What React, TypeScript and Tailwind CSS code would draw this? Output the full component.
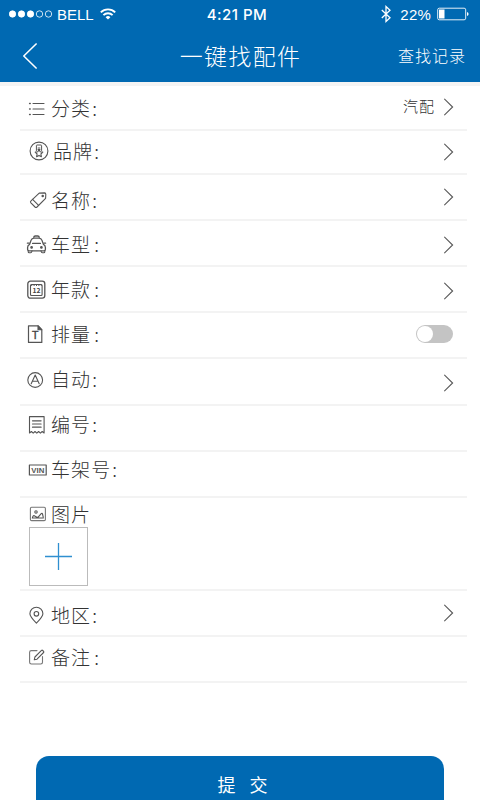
import { useState, type ReactNode } from "react";
import { clsx } from "clsx";

interface FieldRowProps {
  icon: ReactNode;
  label: string;
  height: string;
  iconTop: string;
  labelTop: string;
  labelLeft?: string;
  wideColon?: boolean;
  arrowTop?: string;
  value?: string;
  control?: ReactNode;
  children?: ReactNode;
}

function Glyph({ children }: { children: ReactNode }) {
  return (
    <svg
      viewBox="0 0 20 20"
      className="size-5 overflow-visible"
      fill="none"
      stroke="#555"
      strokeWidth="1.1"
      strokeLinecap="round"
      strokeLinejoin="round"
    >
      {children}
    </svg>
  );
}

function Chevron() {
  return (
    <svg viewBox="0 0 10 18" className="h-[18px] w-2.5" fill="none" stroke="#555" strokeWidth="1.1">
      <path d="M0.3 0.8 8.6 9 0.3 17.2" />
    </svg>
  );
}

const ListIcon = () => (
  <Glyph>
    <path d="M6 4.5h11M6 10h11M6 15.5h11" />
    <path d="M2.6 4.5h.6M2.6 10h.6M2.6 15.5h.6" strokeWidth="1.5" />
  </Glyph>
);

const MedalIcon = () => (
  <Glyph>
    <circle cx="12" cy="10" r="8.9" />
    <path d="M9.4 9.5V4.6q0-.6.6-.6h4q.6 0 .6.6v4.9M11.1 7h1.8M11 8.5h2" strokeWidth="1" />
    <path d="m12 8.4 1.2 2.3 2.6.4-1.9 1.9.5 2.7-2.4-1.3-2.4 1.3.5-2.7-1.9-1.9 2.6-.4z" />
  </Glyph>
);

const TagIcon = () => (
  <Glyph>
    <path d="M12.2 3.1 17.6 2.9Q18.7 3 18.8 4.2L18.6 8.3 10 17Q9 17.9 8 17L3.9 12.8Q3 11.8 4 10.9Z" />
    <path d="m5.6 9.3 6 6" />
    <circle cx="15.7" cy="6" r=".7" fill="#555" />
  </Glyph>
);

const CarIcon = () => (
  <Glyph>
    <path d="M6.8 2.2Q7 1 8.2 1h2.6Q12 1 12.2 2.2" strokeWidth="1.4" />
    <path
      d="M2.6 9.4 4 5.4Q4.8 3.2 7 3.2h5q2.2 0 3 2.2l1.4 4q2 .9 2 3v1.8q0 1.6-1.6 1.6H2.2Q.6 15.8.6 14.2v-1.8q0-2.1 2-3Z"
      strokeWidth="1.3"
    />
    <path d="M.4 8.2h1.8M18.6 8.2h-1.8M5.6 8.4h7.8" strokeWidth="1.3" />
    <path d="M1.2 15.8v1q0 1 1 1h1.4q1 0 1.4-2M17.8 15.8v1q0 1-1 1h-1.4q-1 0-1.4-2" />
    <circle cx="4.6" cy="12.4" r=".8" fill="#555" />
    <circle cx="14.4" cy="12.4" r=".8" fill="#555" />
  </Glyph>
);

const CalendarIcon = () => (
  <Glyph>
    <rect x=".8" y="1.2" width="17" height="17" rx="2.6" strokeWidth="1.3" />
    <rect x="3.5" y="4.5" width="11.6" height="11" rx="1" />
    <path d="M4.2 5.4h10.5" strokeDasharray="1 1.4" strokeWidth="1.4" strokeLinecap="butt" />
    <text x="9.4" y="13.2" fontSize="6.8" fontWeight="700" textAnchor="middle" fill="#444" stroke="none">
      12
    </text>
  </Glyph>
);

const DocIcon = () => (
  <Glyph>
    <path d="M1.5 1.8h9.7l3.6 3.8v12.8H1.5Z" strokeWidth="1.2" />
    <path d="M11 1.8v4h3.8Z" fill="#555" />
    <text
      x="8.2"
      y="15.2"
      fontSize="10.5"
      textAnchor="middle"
      className="font-['Liberation_Sans',sans-serif]"
      fill="#444"
      stroke="#444"
      strokeWidth=".4"
    >
      T
    </text>
  </Glyph>
);

const AutoIcon = () => (
  <Glyph>
    <circle cx="8.2" cy="10" r="7.4" />
    <path d="M4.2 13.8 8.2 5 12.2 13.8M5.4 11.3h5.6" />
  </Glyph>
);

const ReceiptIcon = () => (
  <Glyph>
    <path d="M2.5 18V1.6h14.6V18l-1.9-1.5-1.8 1.6-1.8-1.6-1.8 1.6L8 16.5l-1.8 1.6-1.8-1.6Z" />
    <path d="M5.5 5.8h8.6M5.5 9h8.6M5.5 12.2h8.6" strokeWidth="1.2" />
  </Glyph>
);

const VinIcon = () => (
  <Glyph>
    <rect x="2.4" y="5" width="16.8" height="10" strokeWidth="1.2" />
    <text
      x="10.8"
      y="12.8"
      fontSize="7.8"
      textAnchor="middle"
      className="font-['Liberation_Sans',sans-serif] font-bold"
      fill="#555"
      stroke="none"
    >
      VIN
    </text>
  </Glyph>
);

const PhotoIcon = () => (
  <Glyph>
    <rect x="3.4" y="3.2" width="15" height="13.4" rx="1.2" stroke="#777" />
    <circle cx="9" cy="8" r="1.2" />
    <path d="M5.5 13.4q.8-2.6 2.3-1.4l2 1.2q1 .5 1.8-.5l2.6-3q.8-.8 1.3.3l.8 3.4M5.3 14h11" />
  </Glyph>
);

const PinIcon = () => (
  <Glyph>
    <path d="M9.4 18.2C5 13.6 2.9 11.3 2.9 8.7a6.5 6.5 0 0 1 13 0c0 2.6-2.1 4.9-6.5 9.5Z" />
    <circle cx="9.4" cy="8.8" r="2.3" />
  </Glyph>
);

const NoteIcon = () => (
  <Glyph>
    <path d="M10 3.6H4.4Q2.6 3.6 2.6 5.3v10Q2.6 17 4.4 17h9.4q1.7 0 1.7-1.7V9.6" stroke="#777" />
    <path d="m7.3 12.8.6-2.8 6.6-6.6q.6-.5 1.2.1l.9.9q.5.6 0 1.1L10 12.2Z" />
  </Glyph>
);

function FieldRow({
  icon,
  label,
  height,
  iconTop,
  labelTop,
  labelLeft = "ml-1",
  wideColon = false,
  arrowTop,
  value,
  control,
  children,
}: FieldRowProps) {
  const [name, colon] = label.endsWith(":") ? [label.slice(0, -1), ":"] : [label, ""];

  return (
    <li className={clsx("border-b-2 border-[#f3f3f3]", height)}>
      <div className="flex items-start pr-[13px] pl-[7px]">
        <span className={iconTop}>{icon}</span>
        <span
          className={clsx(
            "text-[19px] leading-5 font-light tracking-[1.1px] whitespace-nowrap text-[#333]",
            labelTop,
            labelLeft
          )}
        >
          {name}
          <span className={wideColon ? "ml-[3px]" : "ml-px"}>{colon}</span>
        </span>
        {arrowTop && (
          <span className={clsx("ml-auto flex items-center", arrowTop)}>
            {value && (
              <span className="-mt-0.5 mr-[9px] text-[15px] leading-[18px] font-light tracking-[1px] text-[#333]">
                {value}
              </span>
            )}
            <Chevron />
          </span>
        )}
        {control}
      </div>
      {children}
    </li>
  );
}

function StatusBar() {
  return (
    <div className="grid h-7 grid-cols-3 items-center pr-[11px] pl-[9px] font-['Liberation_Sans',sans-serif] text-[15px] leading-none">
      <div className="flex items-center">
        <svg viewBox="0 0 44 8" className="h-2 w-11" fill="none" stroke="#fff" strokeWidth=".8">
          <circle cx="3.5" cy="4" r="3.2" fill="#fff" />
          <circle cx="12.5" cy="4" r="3.2" fill="#fff" />
          <circle cx="21.5" cy="4" r="3.2" fill="#fff" />
          <circle cx="30.5" cy="4" r="3.2" />
          <circle cx="39.5" cy="4" r="3.2" />
        </svg>
        <span className="ml-1">BELL</span>
        <svg viewBox="0 0 16 12" className="-mt-px ml-1.5 h-3 w-4" fill="none" stroke="#fff" strokeWidth="1.9">
          <path d="M.8 4.4a10.2 10.2 0 0 1 14.4 0M3.4 7.2a6.5 6.5 0 0 1 9.2 0" />
          <path d="M8 11.6 5.6 9.2a3.5 3.5 0 0 1 4.8 0Z" fill="#fff" stroke="none" />
        </svg>
      </div>
      <span className="-ml-1 text-center font-['Inter','Liberation_Sans',sans-serif] font-medium tracking-[.5px]">
        4:21 PM
      </span>
      <div className="flex items-center justify-end">
        <svg viewBox="0 0 10 18" className="h-[18px] w-2.5" fill="none" stroke="#fff" strokeWidth="1.3">
          <path d="m.8 5 8.2 7.8-4 3.7V1.5l4 3.7L.8 13" />
        </svg>
        <span className="ml-[9px] tracking-[.2px]">22%</span>
        <svg viewBox="0 0 32 14" className="ml-1.5 h-3.5 w-8" fill="none" stroke="#fff">
          <rect x=".7" y="1.2" width="28" height="11.6" rx="1.6" strokeWidth=".9" />
          <rect x="2" y="2.5" width="5.5" height="9" fill="#fff" stroke="none" />
          <path d="M30 5q1.6.4 1.6 2T30 9Z" fill="#fff" stroke="none" />
        </svg>
      </div>
    </div>
  );
}

export default function App() {
  const [displacement, setDisplacement] = useState(false);

  return (
    <div className="flex h-[800px] w-[480px] flex-col overflow-hidden bg-white font-['Noto_Sans_CJK_SC',sans-serif]">
      <header className="h-[82px] shrink-0 bg-[#0069b2] text-white">
        <StatusBar />
        <div className="grid h-[54px] grid-cols-[1fr_auto_1fr] items-center pr-[13px] pl-[23px]">
          <button type="button" aria-label="返回" className="mt-0.5">
            <svg viewBox="0 0 15 26" className="h-[26px] w-[15px]" fill="none" stroke="#fff" strokeWidth="1.5">
              <path d="M13.6 .5 .8 13l12.8 12.5" />
            </svg>
          </button>
          <h1 className="-ml-[9px] text-[23px] leading-7 font-light tracking-[1.3px]">一键找配件</h1>
          <button type="button" className="mr-px justify-self-end text-[16px] leading-5 font-light tracking-[1px]">
            查找记录
          </button>
        </div>
      </header>
      <div className="h-1 shrink-0 bg-[#f4f4f4]" />

      <ul className="mr-[13px] ml-5 shrink-0">
        <FieldRow icon={<ListIcon />} label="分类:" height="h-[45px]" iconTop="mt-[13px]" labelTop="mt-3" arrowTop="mt-3" value="汽配" />
        <FieldRow icon={<MedalIcon />} label="品牌:" height="h-[44px]" iconTop="mt-[10px]" labelTop="mt-[10px]" labelLeft="ml-1.5" arrowTop="mt-3" />
        <FieldRow icon={<TagIcon />} label="名称:" height="h-[46px]" iconTop="mt-[15px]" labelTop="mt-[15px]" arrowTop="mt-[13px]" />
        <FieldRow icon={<CarIcon />} label="车型:" wideColon height="h-[46px]" iconTop="mt-[14px]" labelTop="mt-[13px]" arrowTop="mt-[15px]" />
        <FieldRow icon={<CalendarIcon />} label="年款:" wideColon height="h-[46px]" iconTop="mt-[13px]" labelTop="mt-3" arrowTop="mt-[15px]" />
        <FieldRow
          icon={<DocIcon />}
          label="排量:"
          wideColon
          height="h-[46px]"
          iconTop="mt-[11px]"
          labelTop="mt-[11px]"
          control={
            <button
              type="button"
              role="switch"
              aria-label="排量"
              aria-checked={displacement}
              onClick={() => setDisplacement(!displacement)}
              className={clsx(
                "mt-3 mr-px ml-auto flex h-[18px] w-[37px] rounded-full bg-[#c4c4c4] p-px",
                displacement && "justify-end"
              )}
            >
              <span className="size-4 rounded-full bg-white" />
            </button>
          }
        />
        <FieldRow icon={<AutoIcon />} label="自动:" height="h-[47px]" iconTop="mt-[11px]" labelTop="mt-[10px]" arrowTop="mt-[15px]" />
        <FieldRow icon={<ReceiptIcon />} label="编号:" height="h-[46px]" iconTop="mt-[9px]" labelTop="mt-2" />
        <FieldRow icon={<VinIcon />} label="车架号:" height="h-[46px]" iconTop="mt-[8px]" labelTop="mt-[7px]" />
        <FieldRow icon={<PhotoIcon />} label="图片" height="h-[93px]" iconTop="mt-[6px]" labelTop="mt-[6px]">
          <button
            type="button"
            aria-label="添加图片"
            className="mt-[3px] ml-[9px] flex size-[59px] items-center justify-center border border-[#bbb]"
          >
            <svg viewBox="0 0 27 27" className="-ml-px size-[27px]" stroke="#2f8fd0" strokeWidth="1.3">
              <path d="M13.5 0v27M0 13.5h27" />
            </svg>
          </button>
        </FieldRow>
        <FieldRow icon={<PinIcon />} label="地区:" height="h-[46px]" iconTop="mt-[14px]" labelTop="mt-[14px]" arrowTop="mt-[13px]" />
        <FieldRow icon={<NoteIcon />} label="备注:" wideColon height="h-[46px]" iconTop="mt-[10px]" labelTop="mt-[10px]" />
      </ul>

      <button
        type="button"
        className="mx-9 mt-auto h-11 shrink-0 rounded-t-[13px] bg-[#0069b2] pt-3 pl-[19px] text-[18px] leading-8 tracking-[14px] text-white"
      >
        提交
      </button>
    </div>
  );
}
